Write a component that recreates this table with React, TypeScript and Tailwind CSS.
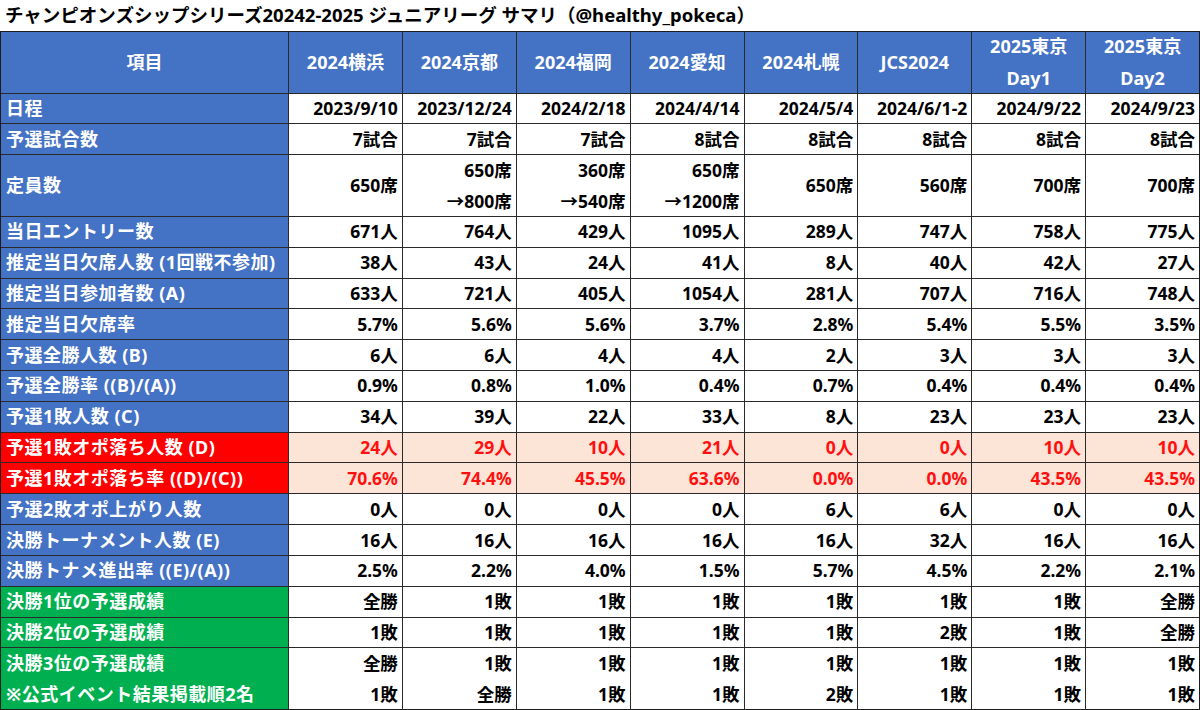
import React from "react";

type Row = {
  label: string[];
  values: string[][];
  kind?: "blue" | "red" | "green";
  span?: 1 | 2;
};

const cols = [
  ["2024横浜"],
  ["2024京都"],
  ["2024福岡"],
  ["2024愛知"],
  ["2024札幌"],
  ["JCS2024"],
  ["2025東京", "Day1"],
  ["2025東京", "Day2"],
];

const s = (arr: string[]) => arr.map((v) => v.split("\n"));

const rows: Row[] = [
  { label: ["日程"], values: s(["2023/9/10", "2023/12/24", "2024/2/18", "2024/4/14", "2024/5/4", "2024/6/1-2", "2024/9/22", "2024/9/23"]) },
  { label: ["予選試合数"], values: s(["7試合", "7試合", "7試合", "8試合", "8試合", "8試合", "8試合", "8試合"]) },
  { label: ["定員数"], span: 2, values: s(["650席", "650席\n→800席", "360席\n→540席", "650席\n→1200席", "650席", "560席", "700席", "700席"]) },
  { label: ["当日エントリー数"], values: s(["671人", "764人", "429人", "1095人", "289人", "747人", "758人", "775人"]) },
  { label: ["推定当日欠席人数 (1回戦不参加)"], values: s(["38人", "43人", "24人", "41人", "8人", "40人", "42人", "27人"]) },
  { label: ["推定当日参加者数 (A)"], values: s(["633人", "721人", "405人", "1054人", "281人", "707人", "716人", "748人"]) },
  { label: ["推定当日欠席率"], values: s(["5.7%", "5.6%", "5.6%", "3.7%", "2.8%", "5.4%", "5.5%", "3.5%"]) },
  { label: ["予選全勝人数 (B)"], values: s(["6人", "6人", "4人", "4人", "2人", "3人", "3人", "3人"]) },
  { label: ["予選全勝率 ((B)/(A))"], values: s(["0.9%", "0.8%", "1.0%", "0.4%", "0.7%", "0.4%", "0.4%", "0.4%"]) },
  { label: ["予選1敗人数 (C)"], values: s(["34人", "39人", "22人", "33人", "8人", "23人", "23人", "23人"]) },
  { label: ["予選1敗オポ落ち人数 (D)"], kind: "red", values: s(["24人", "29人", "10人", "21人", "0人", "0人", "10人", "10人"]) },
  { label: ["予選1敗オポ落ち率 ((D)/(C))"], kind: "red", values: s(["70.6%", "74.4%", "45.5%", "63.6%", "0.0%", "0.0%", "43.5%", "43.5%"]) },
  { label: ["予選2敗オポ上がり人数"], values: s(["0人", "0人", "0人", "0人", "6人", "6人", "0人", "0人"]) },
  { label: ["決勝トーナメント人数 (E)"], values: s(["16人", "16人", "16人", "16人", "16人", "32人", "16人", "16人"]) },
  { label: ["決勝トナメ進出率 ((E)/(A))"], values: s(["2.5%", "2.2%", "4.0%", "1.5%", "5.7%", "4.5%", "2.2%", "2.1%"]) },
  { label: ["決勝1位の予選成績"], kind: "green", values: s(["全勝", "1敗", "1敗", "1敗", "1敗", "1敗", "1敗", "全勝"]) },
  { label: ["決勝2位の予選成績"], kind: "green", values: s(["1敗", "1敗", "1敗", "1敗", "1敗", "2敗", "1敗", "全勝"]) },
  {
    label: ["決勝3位の予選成績", "※公式イベント結果掲載順2名"],
    kind: "green",
    span: 2,
    values: s(["全勝\n1敗", "1敗\n全勝", "1敗\n1敗", "1敗\n1敗", "1敗\n2敗", "1敗\n1敗", "1敗\n1敗", "1敗\n1敗"]),
  },
];

export default function App() {
  return (
    <div
      className="w-[1200px] h-[710px] bg-white overflow-hidden"
      style={{ fontFamily: '"Noto Sans", "Noto Sans CJK JP", sans-serif' }}
    >
      <div className="h-[31px] flex items-center pl-[5px] text-[18.5px] font-bold text-black leading-none">
        チャンピオンズシップシリーズ20242-2025 ジュニアリーグ サマリ（@healthy_pokeca）
      </div>
      <div className="w-[1200px] h-[679px] bg-[#2a2a2a] border border-[#1c1c1c] grid grid-cols-[287px_repeat(8,minmax(0,1fr))] grid-rows-[repeat(22,minmax(0,1fr))] gap-px">
        <div className="row-span-2 bg-[#4472c4] text-white font-bold text-[18px] flex items-center justify-center">
          項目
        </div>
        {cols.map((c, i) => (
          <div
            key={i}
            className="row-span-2 bg-[#4472c4] text-white font-bold text-[18px] leading-[32px] flex flex-col items-center justify-center"
          >
            {c.map((t, j) => (
              <span key={j}>{t}</span>
            ))}
          </div>
        ))}
        {rows.map((r, ri) => {
          const labelBg =
            r.kind === "red" ? "bg-[#ff0000]" : r.kind === "green" ? "bg-[#00b050]" : "bg-[#4472c4]";
          const cellBg = r.kind === "red" ? "bg-[#fce4d6]" : "bg-white";
          const textCol = r.kind === "red" ? "text-[#ff1010]" : "text-black";
          const spanCls = r.span === 2 ? "row-span-2" : "";
          return (
            <React.Fragment key={ri}>
              <div
                className={`${labelBg} ${spanCls} text-white font-bold text-[18px] tracking-[0.5px] leading-[31px] pl-[5px] flex flex-col justify-center whitespace-nowrap`}
              >
                {r.label.map((t, j) => (
                  <span key={j}>{t}</span>
                ))}
              </div>
              {r.values.map((v, vi) => (
                <div
                  key={vi}
                  className={`${cellBg} ${spanCls} ${textCol} font-bold text-[17.5px] leading-[31px] pr-[4px] flex flex-col items-end justify-center whitespace-nowrap`}
                >
                  {v.map((t, j) => (
                    <span key={j}>{t}</span>
                  ))}
                </div>
              ))}
            </React.Fragment>
          );
        })}
      </div>
    </div>
  );
}
